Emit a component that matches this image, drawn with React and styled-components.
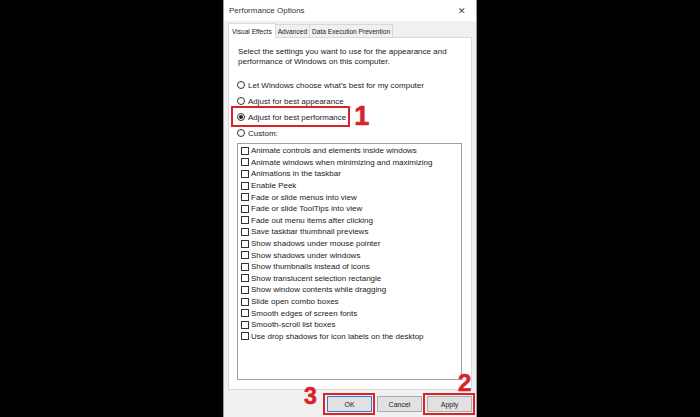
import React from "react";
import styled, { createGlobalStyle, css } from "styled-components";

const Global = createGlobalStyle`
  html, body { margin: 0; padding: 0; background: #000; }
  body { width: 700px; height: 417px; overflow: hidden; font-family: "Liberation Sans", Arial, sans-serif; }
`;

const Page = styled.div`
  width: 700px;
  height: 417px;
  display: flex;
  justify-content: center;
  background: #000;
`;

const Dialog = styled.div`
  width: 254px;
  height: 417px;
  box-sizing: border-box;
  border-left: 1px solid #9a9a9a;
  border-right: 1px solid #9a9a9a;
  display: flex;
  flex-direction: column;
  background: #f0f0f0;
  color: #1e1e1e;
  font-size: 8px;
`;

const TitleBar = styled.div`
  height: 21px;
  flex: none;
  display: flex;
  align-items: center;
  justify-content: space-between;
  padding: 0 10px 0 5px;
  background: #fff;
`;

const Title = styled.span`
  font-size: 8px;
  color: #333;
`;

const Close = styled.span`
  font-size: 9px;
  color: #444;
`;

const Body = styled.div`
  flex: 1;
  display: flex;
  flex-direction: column;
  padding: 0 4px 0 4px;
`;

const TabStrip = styled.div`
  height: 16px;
  display: flex;
  align-items: flex-end;
`;

const Tab = styled.div`
  height: ${(p) => (p.$active ? 15 : 13)}px;
  box-sizing: border-box;
  display: flex;
  align-items: center;
  padding: 0 ${(p) => (p.$active ? 3 : 2)}px;
  font-size: 6.6px;
  color: #222;
  border: 1px solid #d9d9d9;
  border-bottom: none;
  margin-left: -1px;
  background: ${(p) => (p.$active ? "#fff" : "#f0f0f0")};
  position: relative;
  margin-bottom: ${(p) => (p.$active ? -1 : 0)}px;
  z-index: ${(p) => (p.$active ? 1 : 0)};
  &:first-child { margin-left: 0; }
`;

const TabPage = styled.div`
  height: 353px;
  box-sizing: border-box;
  border: 1px solid #d9d9d9;
  background: #fff;
  padding: 9px 9px 0 8px;
  display: flex;
  flex-direction: column;
`;

const Description = styled.p`
  margin: 0 0 0 1px;
  font-size: 8px;
  line-height: 10px;
  color: #222;
`;

const RadioGroup = styled.div`
  margin-top: 10px;
  display: flex;
  flex-direction: column;
  align-items: flex-start;
`;

const RadioRow = styled.label`
  height: 16px;
  display: inline-flex;
  align-items: center;
  gap: 3px;
  font-size: 8px;
  color: #222;
  position: relative;
  ${(p) =>
    p.$marked &&
    css`
      &::before {
        content: "";
        position: absolute;
        top: -3px;
        bottom: -2px;
        left: -6px;
        right: -4px;
        border: 2px solid #d8232a;
      }
    `}
`;

const RadioDot = styled.span`
  width: 8px;
  height: 8px;
  box-sizing: border-box;
  border-radius: 50%;
  border: 1px solid #333;
  background: #fff;
  display: inline-flex;
  align-items: center;
  justify-content: center;
  &::after {
    content: "";
    width: 4px;
    height: 4px;
    border-radius: 50%;
    background: ${(p) => (p.$checked ? "#222" : "transparent")};
  }
`;

const Callout = styled.span`
  position: absolute;
  font-family: "Liberation Sans", Arial, sans-serif;
  font-weight: 700;
  line-height: 1;
  color: #d8232a;
  -webkit-text-stroke: 0.6px #d8232a;
  font-size: ${(p) => p.$size}px;
  left: ${(p) => p.$left};
  top: ${(p) => p.$top}px;
  pointer-events: none;
`;

const ListBox = styled.div`
  margin-top: 2px;
  height: 237px;
  box-sizing: border-box;
  border: 1px solid #a0a0a0;
  padding: 1px 0 0 3px;
  display: flex;
  flex-direction: column;
`;

const CheckRow = styled.label`
  height: 11.6px;
  display: flex;
  align-items: center;
  gap: 2px;
  font-size: 8px;
  color: #222;
  white-space: nowrap;
`;

const CheckBox = styled.span`
  width: 8px;
  height: 8px;
  box-sizing: border-box;
  border: 1px solid #333;
  background: #fff;
  flex: none;
`;

const Footer = styled.div`
  height: 27px;
  display: flex;
  align-items: flex-start;
  justify-content: flex-end;
  gap: 5px;
  padding: 6px 0 0 0;
  box-sizing: border-box;
`;

const Button = styled.div`
  width: 45px;
  height: 16px;
  box-sizing: border-box;
  display: flex;
  align-items: center;
  justify-content: center;
  font-size: 7px;
  color: #222;
  background: #e1e1e1;
  border: 1px solid ${(p) => (p.$default ? "#2f7fd0" : "#adadad")};
  position: relative;
  ${(p) =>
    p.$marked &&
    css`
      &::before {
        content: "";
        position: absolute;
        top: -4px;
        bottom: -4px;
        left: -5px;
        right: -4px;
        border: 2px solid #d8232a;
      }
    `}
`;

const effects = [
  "Animate controls and elements inside windows",
  "Animate windows when minimizing and maximizing",
  "Animations in the taskbar",
  "Enable Peek",
  "Fade or slide menus into view",
  "Fade or slide ToolTips into view",
  "Fade out menu items after clicking",
  "Save taskbar thumbnail previews",
  "Show shadows under mouse pointer",
  "Show shadows under windows",
  "Show thumbnails instead of icons",
  "Show translucent selection rectangle",
  "Show window contents while dragging",
  "Slide open combo boxes",
  "Smooth edges of screen fonts",
  "Smooth-scroll list boxes",
  "Use drop shadows for icon labels on the desktop",
];

const radios = [
  { label: "Let Windows choose what\u2019s best for my computer" },
  { label: "Adjust for best appearance" },
  { label: "Adjust for best performance", checked: true, marked: true },
  { label: "Custom:" },
];

export default function App() {
  return (
    <>
      <Global />
      <Page>
        <Dialog>
          <TitleBar>
            <Title>Performance Options</Title>
            <Close>✕</Close>
          </TitleBar>
          <Body>
            <TabStrip>
              <Tab $active>Visual Effects</Tab>
              <Tab>Advanced</Tab>
              <Tab>Data Execution Prevention</Tab>
            </TabStrip>
            <TabPage>
              <Description>
                Select the settings you want to use for the appearance and
                <br />
                performance of Windows on this computer.
              </Description>
              <RadioGroup>
                {radios.map((r) => (
                  <RadioRow key={r.label} $marked={r.marked}>
                    <RadioDot $checked={r.checked} />
                    {r.label}
                    {r.marked && (
                      <Callout $size={27} $left="calc(100% + 8px)" $top={-6}>
                        1
                      </Callout>
                    )}
                  </RadioRow>
                ))}
              </RadioGroup>
              <ListBox>
                {effects.map((e) => (
                  <CheckRow key={e}>
                    <CheckBox />
                    {e}
                  </CheckRow>
                ))}
              </ListBox>
            </TabPage>
            <Footer>
              <Button $default $marked>
                OK
                <Callout $size={23} $left="-24px" $top={-12}>
                  3
                </Callout>
              </Button>
              <Button>Cancel</Button>
              <Button $marked>
                Apply
                <Callout $size={24} $left="30px" $top={-26}>
                  2
                </Callout>
              </Button>
            </Footer>
          </Body>
        </Dialog>
      </Page>
    </>
  );
}
